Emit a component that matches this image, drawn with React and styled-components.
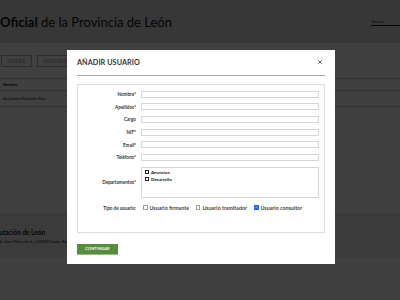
import React from 'react';
import styled, { createGlobalStyle } from 'styled-components';

const Global = createGlobalStyle`
  html, body { margin: 0; padding: 0; }
  body { font-family: 'Lato', 'Open Sans', sans-serif; }
  #root { width: 400px; height: 300px; overflow: hidden; }
`;

const Page = styled.div`
  position: relative;
  width: 400px;
  height: 300px;
  background: #ffffff;
  overflow: hidden;
  display: flex;
  flex-direction: column;
`;

const Header = styled.header`
  height: 43px;
  background: #dcdcdc;
  display: flex;
  align-items: center;
  justify-content: space-between;
  flex-shrink: 0;
`;

const SiteTitle = styled.h1`
  margin: 0;
  font-size: 13px;
  font-weight: 400;
  color: #111;
  white-space: nowrap;
  b { font-weight: 700; }
`;

const Search = styled.div`
  width: 28px;
  margin-top: 2px;
  border-bottom: 1px solid #111;
  font-size: 4px;
  color: #222;
  padding: 0 0 1px 1px;
`;

const Main = styled.main`
  flex: 1;
  padding-top: 12px;
`;

const Tabs = styled.div`
  display: flex;
  gap: 5px;
  padding-left: 1px;
`;

const Tab = styled.div`
  height: 12px;
  padding: 0 5px;
  border: 1px solid #b0b0b0;
  display: flex;
  align-items: center;
  justify-content: center;
  font-size: 5px;
  letter-spacing: 0.4px;
  color: #a0a0a0;
  font-weight: 700;
  min-width: ${({ w }) => w || 0}px;
  box-sizing: border-box;
`;

const Table = styled.div`
  margin-top: 11px;
  border-top: 1px solid #c8c8c8;
`;

const Row = styled.div`
  height: ${({ h }) => h}px;
  display: flex;
  align-items: center;
  padding-left: 3px;
  border-bottom: 1px solid #c8c8c8;
  font-size: 4px;
  color: #111;
  font-weight: ${({ head }) => (head ? 700 : 400)};
  box-sizing: border-box;
`;

const Footer = styled.footer`
  height: 44px;
  background: #e9e9e9;
  margin-bottom: 43px;
  display: flex;
  flex-direction: column;
  justify-content: center;
  gap: 3px;
  padding-top: 2px;
  box-sizing: border-box;
  overflow: hidden;
`;

const FooterName = styled.div`
  font-size: 6.5px;
  font-weight: 700;
  color: #111;
  margin-left: -11px;
  white-space: nowrap;
`;

const FooterAddress = styled.div`
  font-size: 4.5px;
  color: #222;
  margin-left: -13px;
  white-space: nowrap;
`;

const Overlay = styled.div`
  position: absolute;
  inset: 0;
  background: rgba(0, 0, 0, 0.75);
`;

const Modal = styled.div`
  position: absolute;
  left: 67px;
  top: 50px;
  width: 268px;
  height: 214px;
  background: #fff;
  padding: 0 10px;
  box-sizing: border-box;
`;

const ModalHeader = styled.div`
  height: 25.5px;
  border-bottom: 1px solid #a8a8a8;
  display: flex;
  align-items: center;
  justify-content: space-between;
  box-sizing: border-box;
`;

const ModalTitle = styled.h2`
  margin: 0;
  font-size: 7.2px;
  font-weight: 700;
  color: #333;
  letter-spacing: 0.1px;
`;

const Close = styled.button`
  border: 0;
  background: none;
  padding: 0;
  margin-right: 2px;
  width: 6px;
  height: 6px;
  display: flex;
  cursor: pointer;
`;

const FormBox = styled.div`
  margin-top: 8px;
  height: 149px;
  border: 1px solid #dcdcdc;
  padding: 6px 5px 0 0;
  box-sizing: border-box;
`;

const Field = styled.div`
  display: flex;
  align-items: center;
  gap: 5px;
  margin-bottom: ${({ mb }) => mb ?? 5.7}px;
`;

const Label = styled.label`
  width: 58px;
  flex-shrink: 0;
  text-align: right;
  font-size: 4.6px;
  font-weight: 700;
  color: #333;
  white-space: nowrap;
`;

const Input = styled.div`
  flex: 1;
  height: 7px;
  border: 1px solid #d6d6d6;
  box-sizing: border-box;
`;

const Area = styled.div`
  flex: 1;
  height: 31px;
  border: 1px solid #d6d6d6;
  box-sizing: border-box;
  padding: 1.5px 3px;
  display: flex;
  flex-direction: column;
  gap: 1.3px;
`;

const DeptItem = styled.div`
  display: flex;
  align-items: center;
  gap: 2px;
  font-size: 4.5px;
  font-weight: 700;
  color: #111;
  height: 6px;
`;

const SquareBox = styled.span`
  width: 4px;
  height: 4px;
  border: 0.7px solid #222;
  box-sizing: border-box;
`;

const Options = styled.div`
  display: flex;
  align-items: center;
  padding-left: 2px;
`;

const Option = styled.div`
  display: flex;
  align-items: center;
  gap: 2px;
  margin-right: ${({ mr }) => mr}px;
  font-size: 5.3px;
  font-weight: 700;
  color: #444;
  white-space: nowrap;
`;

const Check = styled.span`
  width: 4.5px;
  height: 4.5px;
  box-sizing: border-box;
  border: 0.7px solid ${({ on }) => (on ? '#2768d8' : '#9a9a9a')};
  background: ${({ on }) => (on ? '#2768d8' : '#fff')};
  border-radius: 0.6px;
  display: flex;
  align-items: center;
  justify-content: center;
`;

const Button = styled.button`
  margin-top: 11px;
  width: 41px;
  height: 10.5px;
  border: 0;
  padding: 0;
  background: #568d3b;
  color: #fff;
  font-family: inherit;
  font-size: 3.8px;
  font-weight: 700;
  letter-spacing: 0.2px;
  display: flex;
  align-items: center;
  justify-content: center;
  box-shadow: 0 0.5px 0 #3f6d2a;
`;

const fields = ['Nombre*', 'Apellidos*', 'Cargo', 'NIF*', 'Email*', 'Teléfono*'];

const tipos = [
  { text: 'Usuario firmante', on: false, mr: 7 },
  { text: 'Usuario tramitador', on: false, mr: 7 },
  { text: 'Usuario consultor', on: true, mr: 0 },
];

export default function App() {
  return (
    <>
      <Global />
      <Page>
        <Header>
          <SiteTitle>
            <b>Oficial</b> de la Provincia de León
          </SiteTitle>
          <Search>Buscar</Search>
        </Header>
        <Main>
          <Tabs>
            <Tab w={31}>DATOS</Tab>
            <Tab w={40}>USUARIOS</Tab>
          </Tabs>
          <Table>
            <Row h={12} head>Nombre</Row>
            <Row h={16}>Alejandro Montaño Páez</Row>
          </Table>
        </Main>
        <Footer>
          <FooterName>Diputación de León</FooterName>
          <FooterAddress>Plaza de San Marcelo 6 | 24002 León, España</FooterAddress>
        </Footer>
        <Overlay />
        <Modal>
          <ModalHeader>
            <ModalTitle>AÑADIR USUARIO</ModalTitle>
            <Close aria-label="Cerrar">
              <svg width="6" height="6" viewBox="0 0 6 6">
                <path d="M1.2 1.2 L4.8 4.8 M4.8 1.2 L1.2 4.8" stroke="#666" strokeWidth="1" />
              </svg>
            </Close>
          </ModalHeader>
          <FormBox>
            {fields.map((label) => (
              <Field key={label}>
                <Label>{label}</Label>
                <Input />
              </Field>
            ))}
            <Field mb={7}>
              <Label>Departamentos*</Label>
              <Area>
                <DeptItem><SquareBox />Anuncios</DeptItem>
                <DeptItem><SquareBox />Desarrollo</DeptItem>
              </Area>
            </Field>
            <Field>
              <Label>Tipo de usuario:</Label>
              <Options>
                {tipos.map((t) => (
                  <Option key={t.text} mr={t.mr}>
                    <Check on={t.on}>
                      {t.on && (
                        <svg width="3" height="3" viewBox="0 0 6 6">
                          <path d="M1 3.2 L2.5 4.6 L5 1.4" stroke="#fff" strokeWidth="1.2" fill="none" />
                        </svg>
                      )}
                    </Check>
                    {t.text}
                  </Option>
                ))}
              </Options>
            </Field>
          </FormBox>
          <Button>CONTINUAR</Button>
        </Modal>
      </Page>
    </>
  );
}
